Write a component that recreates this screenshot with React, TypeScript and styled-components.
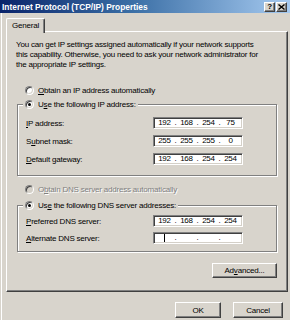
import React from "react";
import styled, { createGlobalStyle } from "styled-components";

const BG = "#d8d4cc";

const GlobalStyle = createGlobalStyle`
  html, body {
    margin: 0;
    padding: 0;
    background: ${BG};
  }
  body {
    font-family: "Liberation Sans", Arial, sans-serif;
    font-size: 8px;
    letter-spacing: -0.2px;
    color: #000;
  }
`;

type IpValue = string[] | null;

const ipRows: { label: string; key: number; value: IpValue }[] = [
  { label: "IP address:", key: 0, value: ["192", "168", "254", "75"] },
  { label: "Subnet mask:", key: 1, value: ["255", "255", "255", "0"] },
  { label: "Default gateway:", key: 0, value: ["192", "168", "254", "254"] },
];

const dnsRows: { label: string; key: number; value: IpValue }[] = [
  { label: "Preferred DNS server:", key: 0, value: ["192", "168", "254", "254"] },
  { label: "Alternate DNS server:", key: 0, value: null },
];

// underline the access key letter
const Mnemonic: React.FC<{ text: string; at: number }> = ({ text, at }) => (
  <>
    {text.slice(0, at)}
    <u>{text[at]}</u>
    {text.slice(at + 1)}
  </>
);

const IpControl: React.FC<{ value: IpValue }> = ({ value }) => (
  <IpBox>
    {[0, 1, 2, 3].map((i) => (
      <React.Fragment key={i}>
        <IpField>
          {value ? value[i] : i === 0 ? <Caret /> : null}
        </IpField>
        {i < 3 && <IpDot>.</IpDot>}
      </React.Fragment>
    ))}
  </IpBox>
);

const App: React.FC = () => {
  return (
    <Dialog>
      <GlobalStyle />
      <TitleBar>
        <TitleText>Internet Protocol (TCP/IP) Properties</TitleText>
        <CaptionButtons>
          <CaptionButton>?</CaptionButton>
          <CaptionButton>
            <svg width="7" height="6" viewBox="0 0 7 6">
              <path d="M0.5 0.5 L6.5 5.5 M6.5 0.5 L0.5 5.5" stroke="#000" strokeWidth="1.4" />
            </svg>
          </CaptionButton>
        </CaptionButtons>
      </TitleBar>

      <Body>
        <TabStrip>
          <Tab>General</Tab>
        </TabStrip>

        <Panel>
          <Intro>
            <span>You can get IP settings assigned automatically if your network supports</span>
            <span>this capability. Otherwise, you need to ask your network administrator for</span>
            <span>the appropriate IP settings.</span>
          </Intro>

          <OptionRow $top={15}>
            <Radio />
            <span>
              <Mnemonic text="Obtain an IP address automatically" at={0} />
            </span>
          </OptionRow>

          <GroupBox $top={9}>
            <Legend>
              <Radio $checked />
              <span>
                <Mnemonic text="Use the following IP address:" at={1} />
              </span>
            </Legend>
            <FieldGrid $top={8} $gap={6}>
              {ipRows.map((r) => (
                <React.Fragment key={r.label}>
                  <FieldLabel>
                    <Mnemonic text={r.label} at={r.key} />
                  </FieldLabel>
                  <IpControl value={r.value} />
                </React.Fragment>
              ))}
            </FieldGrid>
          </GroupBox>

          <OptionRow $top={8} $disabled>
            <Radio $disabled />
            <span>
              <Mnemonic text="Obtain DNS server address automatically" at={1} />
            </span>
          </OptionRow>

          <GroupBox $top={11} $bottom={7}>
            <Legend>
              <Radio $checked />
              <span>
                <Mnemonic text="Use the following DNS server addresses:" at={2} />
              </span>
            </Legend>
            <FieldGrid $top={5} $gap={5}>
              {dnsRows.map((r) => (
                <React.Fragment key={r.label}>
                  <FieldLabel>
                    <Mnemonic text={r.label} at={r.key} />
                  </FieldLabel>
                  <IpControl value={r.value} />
                </React.Fragment>
              ))}
            </FieldGrid>
          </GroupBox>

          <AdvancedRow>
            <PushButton $w={65} $h={15}>
              <Mnemonic text="Advanced..." at={2} />
            </PushButton>
          </AdvancedRow>
        </Panel>

        <Footer>
          <PushButton $w={46} $h={16}>OK</PushButton>
          <PushButton $w={50} $h={16}>Cancel</PushButton>
        </Footer>
      </Body>
    </Dialog>
  );
};

// ================== styles ========================
const Dialog = styled.div`
  width: 290px;
  height: 320px;
  background: ${BG};
  overflow: hidden;
`;

const TitleBar = styled.div`
  height: 13px;
  display: flex;
  align-items: center;
  justify-content: space-between;
  padding: 0 3px 0 2px;
  background: linear-gradient(to right, #0a246a 0%, #3a6ea5 45%, #a6caf0 100%);
`;

const TitleText = styled.span`
  color: #fff;
  font-weight: bold;
  font-size: 8.4px;
  letter-spacing: 0;
  white-space: nowrap;
`;

const CaptionButtons = styled.div`
  display: flex;
  gap: 1px;
`;

const CaptionButton = styled.div`
  width: 11px;
  height: 10px;
  box-sizing: border-box;
  background: ${BG};
  border: 1px solid;
  border-color: #fff #404040 #404040 #fff;
  box-shadow: inset -1px -1px 0 #808080;
  display: flex;
  align-items: center;
  justify-content: center;
  font-weight: bold;
  font-size: 8px;
  line-height: 1;
`;

const Body = styled.div`
  height: 307px;
  margin-left: 1px;
  border-left: 1px solid #fff;
  padding: 5px 0 0 4px;
`;

const TabStrip = styled.div`
  display: flex;
  height: 13px;
`;

const Tab = styled.div`
  position: relative;
  z-index: 1;
  width: 39px;
  height: 15px;
  box-sizing: border-box;
  background: ${BG};
  border: 1px solid;
  border-color: #fff #404040 transparent #fff;
  border-bottom: none;
  border-radius: 2px 2px 0 0;
  box-shadow: inset -1px 0 0 #808080;
  padding: 2px 0 0 5px;
  line-height: 9px;
`;

const Panel = styled.div`
  width: 282px;
  height: 261px;
  box-sizing: border-box;
  border: 1px solid;
  border-color: #fff #404040 #404040 #fff;
  box-shadow: inset -1px -1px 0 #808080;
  padding: 8px 10px 0 9px;
  display: flex;
  flex-direction: column;
`;

const Intro = styled.div`
  display: flex;
  flex-direction: column;
  line-height: 10px;
  white-space: nowrap;
`;

const OptionRow = styled.div<{ $top: number; $disabled?: boolean }>`
  display: flex;
  align-items: center;
  gap: 4px;
  height: 10px;
  margin: ${({ $top }) => $top}px 0 0 9px;
  white-space: nowrap;
  color: ${({ $disabled }) => ($disabled ? "#808080" : "#000")};
  text-shadow: ${({ $disabled }) => ($disabled ? "1px 1px 0 #fff" : "none")};
`;

const Radio = styled.span<{ $checked?: boolean; $disabled?: boolean }>`
  width: 9px;
  height: 9px;
  flex: none;
  box-sizing: border-box;
  border-radius: 50%;
  border: 1px solid;
  border-color: #808080 #fff #fff #808080;
  box-shadow: inset 1px 1px 0 #404040, inset -1px -1px 0 #d4d0c8;
  background: ${({ $disabled }) => ($disabled ? "#d4d0c8" : "#fff")};
  display: flex;
  align-items: center;
  justify-content: center;

  &::after {
    content: "";
    width: 3px;
    height: 3px;
    border-radius: 50%;
    background: #000;
    display: ${({ $checked }) => ($checked ? "block" : "none")};
  }
`;

const GroupBox = styled.div<{ $top: number; $bottom?: number }>`
  width: 260px;
  box-sizing: border-box;
  margin: ${({ $top }) => $top}px 0 0 1px;
  border: 1px solid #808080;
  box-shadow: inset 1px 1px 0 #fff, 1px 1px 0 #fff;
  padding: 0 0 ${({ $bottom }) => $bottom ?? 10}px 8px;
  display: flex;
  flex-direction: column;
`;

const Legend = styled.div`
  display: flex;
  align-items: center;
  gap: 4px;
  height: 10px;
  width: fit-content;
  margin: -6px 0 0 -3px;
  padding: 0 2px;
  background: ${BG};
  white-space: nowrap;
`;

const FieldGrid = styled.div<{ $top: number; $gap: number }>`
  display: grid;
  grid-template-columns: 127px 90px;
  grid-auto-rows: 12px;
  row-gap: ${({ $gap }) => $gap}px;
  margin-top: ${({ $top }) => $top}px;
  align-items: center;
`;

const FieldLabel = styled.span`
  white-space: nowrap;
`;

const IpBox = styled.div`
  height: 12px;
  box-sizing: border-box;
  background: #fff;
  border: 1px solid;
  border-color: #808080 #fff #fff #808080;
  box-shadow: inset 1px 1px 0 #404040, inset -1px -1px 0 #d4d0c8;
  padding-left: 2px;
  display: flex;
  align-items: center;
`;

const IpField = styled.span`
  width: 17px;
  display: flex;
  justify-content: center;
  align-items: center;
  line-height: 10px;
`;

const IpDot = styled.span`
  width: 5px;
  text-align: center;
  line-height: 10px;
`;

const Caret = styled.span`
  width: 1px;
  height: 8px;
  background: #000;
`;

const AdvancedRow = styled.div`
  display: flex;
  justify-content: flex-end;
  margin-top: 11px;
`;

const PushButton = styled.div<{ $w: number; $h: number }>`
  width: ${({ $w }) => $w}px;
  height: ${({ $h }) => $h}px;
  box-sizing: border-box;
  background: ${BG};
  border: 1px solid;
  border-color: #fff #404040 #404040 #fff;
  box-shadow: inset -1px -1px 0 #808080;
  display: flex;
  align-items: center;
  justify-content: center;
  white-space: nowrap;
`;

const Footer = styled.div`
  display: flex;
  justify-content: flex-end;
  gap: 12px;
  padding: 10px 7px 0 0;
`;

export default App;
